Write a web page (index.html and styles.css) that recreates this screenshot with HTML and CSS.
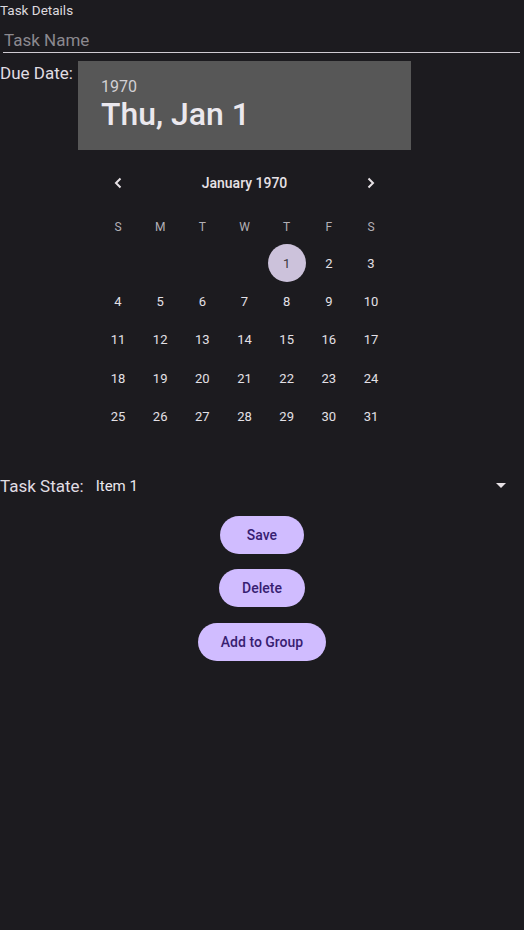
FILE: index.html
```html
<!DOCTYPE html>
<html lang="en">
<head>
<meta charset="utf-8">
<title>Task Details</title>
<link rel="stylesheet" href="styles.css">
</head>
<body>
<div class="screen">
  <div class="title">Task Details</div>
  <input class="name-input" type="text" placeholder="Task Name">
  <div class="due-row">
    <span class="due-label">Due Date:</span>
    <div class="picker">
      <div class="picker-header">
        <div class="picker-year">1970</div>
        <div class="picker-date">Thu, Jan 1</div>
      </div>
      <div class="calendar">
        <div class="month-row">
          <span class="nav"><svg width="10" height="12" viewBox="0 0 10 12"><polyline points="7.5,1.5 3,6 7.5,10.5" fill="none" stroke="#e6e1e5" stroke-width="2"/></svg></span>
          <span class="month-title">January 1970</span>
          <span class="nav"><svg width="10" height="12" viewBox="0 0 10 12"><polyline points="2.5,1.5 7,6 2.5,10.5" fill="none" stroke="#e6e1e5" stroke-width="2"/></svg></span>
        </div>
        <div class="weekdays">
          <span>S</span><span>M</span><span>T</span><span>W</span><span>T</span><span>F</span><span>S</span>
        </div>
        <div class="days">
          <span></span><span></span><span></span><span></span>
          <span class="day"><span class="selected">1</span></span>
          <span class="day">2</span><span class="day">3</span>
          <span class="day">4</span><span class="day">5</span><span class="day">6</span><span class="day">7</span><span class="day">8</span><span class="day">9</span><span class="day">10</span>
          <span class="day">11</span><span class="day">12</span><span class="day">13</span><span class="day">14</span><span class="day">15</span><span class="day">16</span><span class="day">17</span>
          <span class="day">18</span><span class="day">19</span><span class="day">20</span><span class="day">21</span><span class="day">22</span><span class="day">23</span><span class="day">24</span>
          <span class="day">25</span><span class="day">26</span><span class="day">27</span><span class="day">28</span><span class="day">29</span><span class="day">30</span><span class="day">31</span>
        </div>
      </div>
    </div>
  </div>
  <div class="state-row">
    <span class="state-label">Task State:</span>
    <div class="spinner">
      <span class="spinner-value">Item 1</span>
      <svg class="spinner-arrow" width="10" height="5" viewBox="0 0 10 5"><polygon points="0,0 10,0 5,5" fill="#e6e1e5"/></svg>
    </div>
  </div>
  <div class="actions">
    <button class="btn">Save</button>
    <button class="btn">Delete</button>
    <button class="btn">Add to Group</button>
  </div>
</div>
</body>
</html>
```

FILE: styles.css
```css
* { box-sizing: border-box; }

html, body {
  margin: 0;
  padding: 0;
  background: #1c1b1f;
}

body {
  font-family: Roboto, "Noto Sans", sans-serif;
  color: #e6e1e5;
}

.screen {
  width: 524px;
  min-height: 930px;
  display: flex;
  flex-direction: column;
}

.title {
  font-size: 13.5px;
  line-height: 20px;
  color: #dcd8de;
}

.name-input {
  margin: 8px 4px 0 3px;
  padding: 0 0 0 1px;
  height: 25px;
  font-family: Roboto, sans-serif;
  font-size: 17px;
  line-height: 24px;
  color: #e6e1e5;
  background: transparent;
  border: none;
  border-bottom: 1px solid #cfcbd2;
  outline: none;
}

.name-input::placeholder {
  color: #8b898f;
}

.due-row {
  margin-top: 8px;
  display: flex;
  align-items: flex-start;
}

.due-label {
  width: 78px;
  font-size: 17px;
  line-height: 24px;
  color: #e0dde3;
}

.picker {
  width: 333px;
  display: flex;
  flex-direction: column;
}

.picker-header {
  height: 89px;
  background: #575757;
  padding: 16px 0 0 23px;
}

.picker-year {
  font-size: 16px;
  line-height: 19px;
  color: #d2d0d4;
}

.picker-date {
  font-family: "Roboto Medium", Roboto, sans-serif;
  font-size: 32px;
  line-height: 36px;
  font-weight: 500;
  color: #ebe8ee;
}

.calendar {
  padding: 0 18.9px;
}

.month-row {
  margin-top: 9px;
  height: 48px;
  display: grid;
  grid-template-columns: 42.17px 1fr 42.17px;
  align-items: center;
}

.nav {
  display: flex;
  justify-content: center;
  align-items: center;
}

.month-title {
  text-align: center;
  font-family: "Roboto Medium", Roboto, sans-serif;
  font-size: 14px;
  font-weight: 500;
  color: #e6e1e5;
}

.weekdays {
  margin-top: 2px;
  height: 35px;
  display: grid;
  grid-template-columns: repeat(7, 1fr);
  align-items: center;
  font-size: 12px;
  color: #b3b0b6;
  text-align: center;
}

.days {
  display: grid;
  grid-template-columns: repeat(7, 1fr);
  grid-auto-rows: 38.3px;
  font-size: 13px;
  color: #e3e0e6;
}

.day {
  display: flex;
  align-items: center;
  justify-content: center;
}

.selected {
  width: 38px;
  height: 38px;
  border-radius: 50%;
  background: #ccc2db;
  color: #3a3840;
  display: flex;
  align-items: center;
  justify-content: center;
}

.state-row {
  margin-top: 26.5px;
  height: 48px;
  display: flex;
  align-items: center;
}

.state-label {
  font-size: 17px;
  line-height: 24px;
  color: #e0dde3;
}

.spinner {
  flex: 1;
  display: flex;
  align-items: center;
  justify-content: space-between;
  padding: 0 18px 0 12px;
}

.spinner-value {
  font-size: 15px;
  line-height: 24px;
  color: #ebe8ee;
}

.actions {
  margin-top: 6px;
  display: flex;
  flex-direction: column;
  align-items: center;
  gap: 15.5px;
}

.btn {
  height: 38px;
  min-width: 84px;
  padding: 0 23px;
  border: none;
  border-radius: 19px;
  background: #d0bcff;
  color: #381e72;
  font-family: "Roboto Medium", Roboto, sans-serif;
  font-size: 14px;
  font-weight: 500;
}
```
